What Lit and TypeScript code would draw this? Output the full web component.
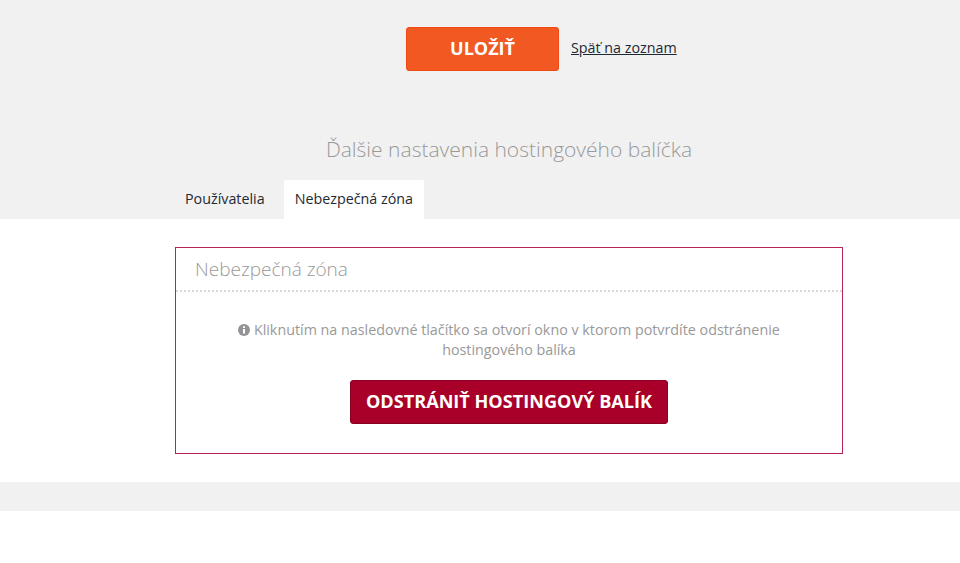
import { LitElement, html, css } from "lit";
import { customElement } from "lit/decorators.js";

@customElement("app-root")
export class AppRoot extends LitElement {
  static styles = css`
    :host { display: block; width: 960px; height: 563px; background: #fff; font-family: "Open Sans", sans-serif; color: #1f2933; overflow: hidden; }
    .top { background: #f1f1f1; height: 219px; display: flex; flex-direction: column; }
    .actions { display: flex; align-items: center; padding: 27px 0 0 406px; gap: 12px; height: 44px; }
    .save { box-sizing: border-box; width: 153px; height: 44px; padding-bottom: 2px; background: #f25822; border: 1px solid #ee4a12; border-radius: 3px; color: #fff; font: 700 18px "Open Sans", sans-serif; display: flex; align-items: center; justify-content: center; }
    .back { font-size: 14.3px; line-height: 20px; margin-top: -3px; color: #1f2933; text-decoration: underline; }
    .title { margin: 60px 0 0; text-align: center; font-size: 21px; font-weight: 300; color: #999; line-height: 36px; padding-left: 58px; }
    .tabs { display: flex; margin-top: auto; padding-left: 174px; gap: 8px; }
    .tab { padding: 0 11px; height: 39px; line-height: 38px; font-size: 14.3px; color: #1f2933; border-radius: 2px 2px 0 0; }
    .tab.active { background: #fff; }
    .main { padding: 28px 117px 0 175px; height: 263px; box-sizing: border-box; }
    .panel { box-sizing: border-box; height: 207px; border: 1px solid #b8234f; }
    .head { height: 42px; line-height: 42px; padding-left: 19px; font-size: 19px; font-weight: 300; color: #999; border-bottom: 2px dotted #d8d8d8; }
    .msg { margin: 28px auto 0; width: 600px; text-align: center; font-size: 14.3px; line-height: 20px; color: #999; }
    .msg svg { width: 12px; height: 12px; vertical-align: -1px; }
    .danger { display: block; box-sizing: border-box; margin: 20px auto 0; width: 318px; height: 44px; padding: 0 0 3px; background: #a80028; border: 1px solid #8c0024; border-radius: 3px; color: #fff; font: 700 18.1px "Open Sans", sans-serif; }
    .band { background: #f1f1f1; height: 29px; }
  `;
  render() {
    return html`
      <div class="top">
        <div class="actions"><div class="save">ULOŽIŤ</div><a class="back">Späť na zoznam</a></div>
        <h2 class="title">Ďalšie nastavenia hostingového balíčka</h2>
        <div class="tabs"><div class="tab">Používatelia</div><div class="tab active">Nebezpečná zóna</div></div>
      </div>
      <div class="main">
        <div class="panel">
          <div class="head">Nebezpečná zóna</div>
          <p class="msg"><svg viewBox="0 0 12 12"><circle cx="6" cy="6" r="6" fill="#949494"/><rect x="5" y="5" width="2" height="4.5" fill="#fff"/><rect x="5" y="2.2" width="2" height="1.8" fill="#fff"/></svg> Kliknutím na nasledovné tlačítko sa otvorí okno v ktorom potvrdíte odstránenie hostingového balíka</p>
          <button class="danger">ODSTRÁNIŤ HOSTINGOVÝ BALÍK</button>
        </div>
      </div>
      <div class="band"></div>
    `;
  }
}
